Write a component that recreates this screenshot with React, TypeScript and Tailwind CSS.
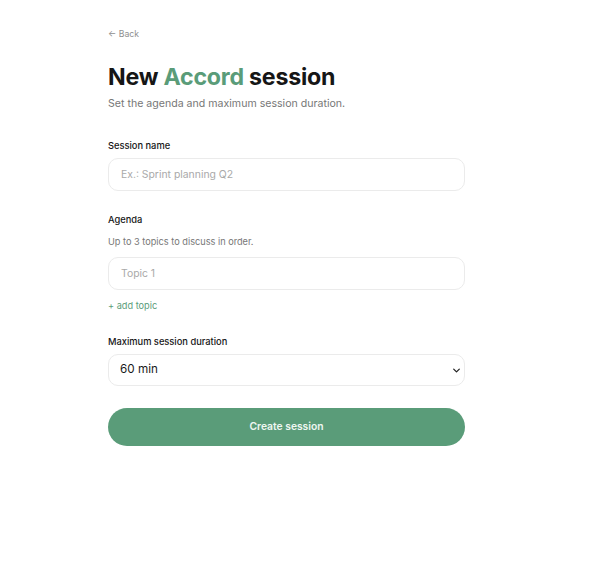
export default function App() {
  return (
    <div className="min-h-[573px] bg-white font-['Inter',sans-serif] text-[#1a1a1a]">
      <div className="w-[357px] ml-[108px] pt-[28px]">
        <a href="#" className="block text-[8.7px] leading-[12px] text-[#8f8f8f]">
          ← Back
        </a>

        <h1 className="mt-[23px] text-[23.2px] font-bold leading-[28px] tracking-[-0.01em] text-[#161616]">
          New <span className="text-[#5a9c79]">Accord</span> session
        </h1>
        <p className="mt-[6px] text-[10.6px] leading-[14px] text-[#777]">
          Set the agenda and maximum session duration.
        </p>

        <form className="mt-[29px] flex flex-col" onSubmit={(e) => e.preventDefault()}>
          <label className="text-[9.3px] font-medium leading-[12px] text-[#161616]">Session name</label>
          <input
            type="text"
            placeholder="Ex.: Sprint planning Q2"
            className="mt-[6px] h-[33px] w-full rounded-[10px] border border-[#ebebeb] px-[12px] text-[10.4px] outline-none placeholder:text-[#a9a9a9]"
          />

          <label className="mt-[23px] text-[9.3px] font-medium leading-[12px] text-[#161616]">Agenda</label>
          <p className="mt-[10px] text-[9.2px] leading-[12px] text-[#777]">Up to 3 topics to discuss in order.</p>
          <input
            type="text"
            placeholder="Topic 1"
            className="mt-[9px] h-[33px] w-full rounded-[10px] border border-[#ebebeb] px-[12px] text-[10.4px] outline-none placeholder:text-[#a9a9a9]"
          />
          <button type="button" className="mt-[10px] self-start text-[9.2px] leading-[12px] text-[#5a9c79]">
            + add topic
          </button>

          <label className="mt-[24px] text-[9.3px] font-medium leading-[12px] text-[#161616]">
            Maximum session duration
          </label>
          <div className="relative mt-[6px]">
            <select
              defaultValue="60"
              className="h-[32px] w-full appearance-none rounded-[10px] border border-[#ebebeb] bg-white pl-[11px] pr-[20px] text-[11.7px] text-[#1a1a1a] outline-none"
            >
              <option value="30">30 min</option>
              <option value="60">60 min</option>
              <option value="90">90 min</option>
            </select>
            <svg
              viewBox="0 0 10 6"
              className="pointer-events-none absolute right-[5px] top-[14px] h-[5px] w-[7px]"
              fill="none"
              stroke="#222"
              strokeWidth="1.8"
              strokeLinecap="round"
              strokeLinejoin="round"
            >
              <path d="M1 1l4 4 4-4" />
            </svg>
          </div>

          <button
            type="submit"
            className="mt-[22px] h-[38px] w-full rounded-full bg-[#5a9c79] text-[10.3px] font-semibold text-[#eef6f1]"
          >
            Create session
          </button>
        </form>
      </div>
    </div>
  );
}
